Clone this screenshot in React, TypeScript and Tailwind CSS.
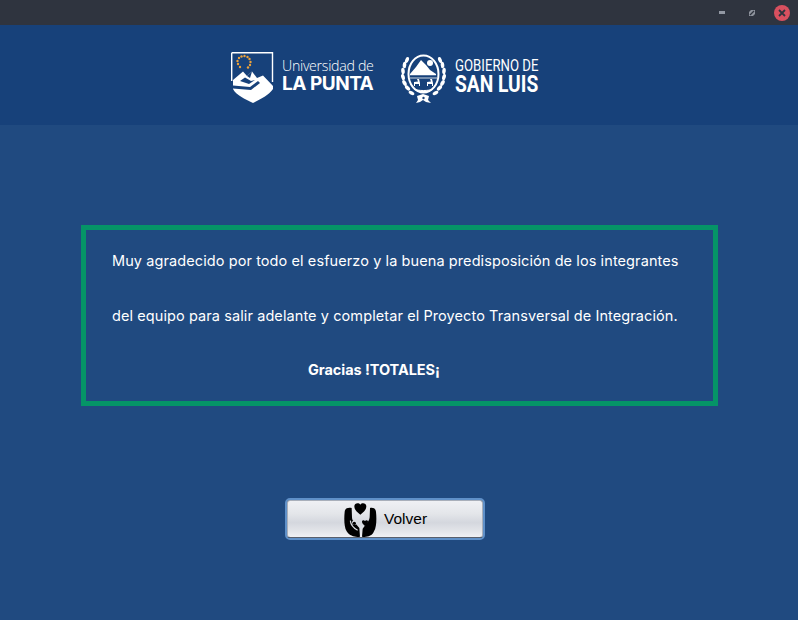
const leaves = [
  [7, 7, 20], [4.5, 12, 5], [3, 18, -5], [3, 24, -15], [4.5, 30, -30], [7.5, 35, -45], [11.5, 40, -60],
];
const bodyFont = { fontFamily: '"Inter", "Liberation Sans", sans-serif' };

function Shield() {
  return (
    <svg width="43" height="52" viewBox="0 0 43 52" className="shrink-0">
      <path d="M0.7 0.7 H41.5 V30 M0.7 0.7 V29" fill="none" stroke="#fff" strokeWidth="1.4" />
      <path d="M2 28 L12 19.5 L16 24 L21 19.5 L26 26 L32 23.5 L42 34 L42 37 C38 43 30 47 22 51 C14 47 5 43 2 37 Z" fill="#fff" />
      <path d="M2 33.5 L19 35 L27 29 L29 31 L20 38 L2 36.5 Z" fill="#17417a" />
      <path d="M9 29 L14 25.5 L20 29 L24 28 L18 32 Z" fill="#17417a" />
      <path d="M16 24 L21 19.5 L19 26 Z" fill="#17417a" />
      {[[7, 12], [6.5, 9], [8, 6], [10.5, 4.5], [13.5, 4], [16.5, 5], [18.5, 7], [19.5, 10], [19, 13], [17, 15.5], [9, 15]].map(([x, y]) => (
        <circle key={`${x}-${y}`} cx={x} cy={y} r="1.2" fill="#eda23a" />
      ))}
    </svg>
  );
}

function Crest() {
  return (
    <svg width="47" height="52" viewBox="0 0 47 52" className="shrink-0 ml-[8px] mt-[1px]">
      {leaves.map(([x, y, r]) => (
        <g key={`${x}-${y}`}>
          <ellipse cx={x} cy={y} rx="1.8" ry="3.2" transform={`rotate(${r} ${x} ${y})`} fill="#fff" />
          <ellipse cx={47 - x} cy={y} rx="1.8" ry="3.2" transform={`rotate(${-r} ${47 - x} ${y})`} fill="#fff" />
        </g>
      ))}
      <ellipse cx="23.5" cy="21" rx="15" ry="18.5" fill="#17417a" stroke="#fff" strokeWidth="2" />
      <path d="M10 21 L16 14 L21 7 L26 12 L30 17 L36 21 V23 H10 Z" fill="#fff" />
      <circle cx="30" cy="10" r="3" fill="#fff" />
      <path d="M10 23 H37" stroke="#17417a" strokeWidth="1.5" />
      <path d="M10 25 H37" stroke="#fff" strokeWidth="0.8" />
      <path d="M14 33 V29 L18 28.5 L17 26 L19 26 L20 30 L20 33 H19 V31 H15 V33 Z" fill="#fff" />
      <path d="M27 33 V29 L31 28.5 L30 26 L32 26 L33 30 L33 33 H32 V31 H28 V33 Z" fill="#fff" />
      <path d="M14 36 C18 38 29 38 33 36 L29 38.5 H18 Z" fill="#fff" stroke="#fff" strokeWidth="1" />
      <path d="M17 43 L23 41 L29 43 L28 47 L31 50 L26 49 L23 47 L20 49 L16 50 L18 47 Z" fill="#fff" />
      <circle cx="23.5" cy="45" r="1.2" fill="#17417a" />
    </svg>
  );
}

function Hands() {
  return (
    <svg width="36" height="36" viewBox="6 9 108 108" className="shrink-0">
      <path d="M61 50 C51 42 43 36 43 25 C43 15 56 12 61 20 C66 12 79 15 79 25 C79 36 71 42 61 50 Z" fill="#000" />
      <path d="M14 42 C14 33 22 27 35 30 L36 58 C36 64 38 67 42 71 L58 90 L60 116 C48 118 30 116 20 100 C12 88 12 60 14 42 Z" fill="#000" />
      <path d="M108 42 C108 33 100 27 90 30 L89 58 C88 66 84 72 80 76 L68 92 L66 116 C78 118 96 116 102 100 C110 88 110 60 108 42 Z" fill="#000" />
      <path d="M31 68 C32 80 40 90 53 97" fill="none" stroke="#dcdee4" strokeWidth="3.5" />
      <circle cx="43" cy="74" r="7" fill="#dcdee4" />
      <circle cx="43" cy="76" r="5" fill="#000" />
      <path d="M75 84 C69 78 66 75 66 71 C66 66 72 65 75 69 C78 65 84 66 84 71 C84 75 81 78 75 84 Z" fill="#000" />
    </svg>
  );
}

export default function App() {
  return (
    <div className="w-[798px] h-[620px] flex flex-col bg-[#204a80] overflow-hidden" style={bodyFont}>
      <div className="h-[25px] bg-[#2f343f] flex items-center justify-end shrink-0">
        <div className="w-[6px] h-[3px] bg-[#9298a3] mr-[24px]" />
        <svg width="6" height="6" viewBox="0 0 6 6" className="mr-[19px]">
          <path d="M0 2 L2 0 H6 V4 L4 6 H0 Z" fill="#8d929c" />
          <path d="M1 5 L5 1" stroke="#2f343f" strokeWidth="1.2" />
        </svg>
        <div className="w-[16px] h-[16px] rounded-full bg-[#d9505f] flex items-center justify-center mr-[8px]">
          <svg width="8" height="8" viewBox="0 0 8 8">
            <path d="M1 1 L7 7 M7 1 L1 7" stroke="#2f343f" strokeWidth="1.8" />
          </svg>
        </div>
      </div>

      <div className="h-[100px] bg-[#17417a] flex items-start shrink-0 pl-[231px] pt-[27px]">
        <Shield />
        <div className="ml-[8px] w-[110px] text-white shrink-0">
          <div className="text-[14.2px] leading-[17px] mt-[5px] whitespace-nowrap font-light tracking-[-0.3px]" style={{ fontFamily: '"Open Sans", sans-serif' }}>Universidad de</div>
          <div className="text-[19px] leading-[20px] whitespace-nowrap font-bold tracking-[-0.5px]">LA PUNTA</div>
        </div>
        <Crest />
        <div className="ml-[8px] text-white shrink-0">
          <div className="text-[16.5px] leading-[17px] mt-[5px] whitespace-nowrap origin-left scale-x-[0.8]" style={{ fontFamily: 'Roboto, sans-serif' }}>GOBIERNO DE</div>
          <div className="text-[24px] leading-[21px] whitespace-nowrap font-bold origin-left scale-x-[0.8]" style={{ fontFamily: 'Roboto, sans-serif' }}>SAN LUIS</div>
        </div>
      </div>

      <div className="ml-[81px] mt-[100px] w-[637px] h-[181px] border-[5px] border-[#059467] pl-[26px] pt-[3px] text-white text-[14.5px] leading-[55px] tracking-[0.09px] shrink-0">
        <div className="whitespace-nowrap">Muy agradecido por todo el esfuerzo y la buena predisposición de los integrantes</div>
        <div className="whitespace-nowrap">del equipo para salir adelante y completar el Proyecto Transversal de Integración.</div>
        <div className="whitespace-nowrap ml-[196px] font-bold -mt-[1px] tracking-[-0.06px]">Gracias !TOTALES¡</div>
      </div>

      <button className="ml-[285px] mt-[92px] w-[200px] h-[42px] rounded-[5px] border-2 border-[#5f90c8] shrink-0 p-0">
        <span className="flex w-full h-full items-center rounded-[3px] border border-[#a9afba] border-b-[#59606c] pl-[54px] bg-[linear-gradient(#eff0f4,#e4e6ea_35%,#d4d7de_60%,#e4e6ea_85%,#f0f1f4)]">
          <Hands />
          <span className="ml-[6px] text-[15.5px] text-black" style={{ fontFamily: '"Liberation Sans", sans-serif' }}>Volver</span>
        </span>
      </button>
    </div>
  );
}
